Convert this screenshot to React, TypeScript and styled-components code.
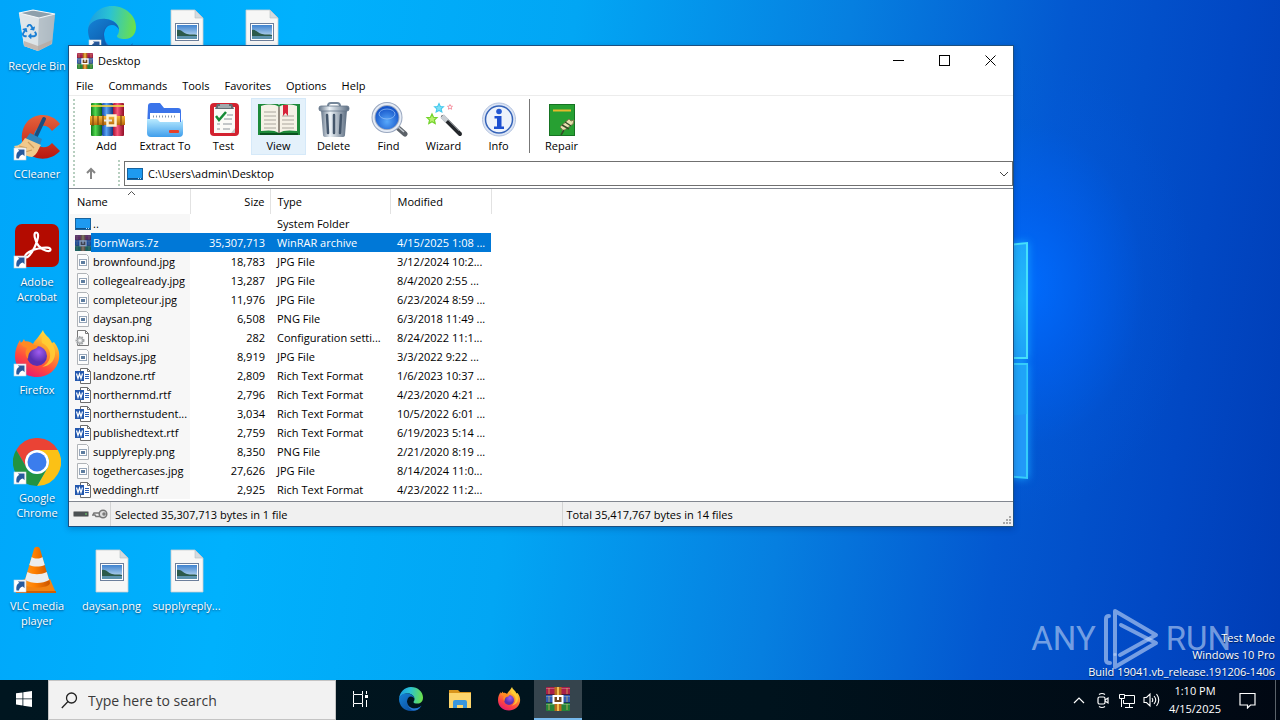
import React from "react";
import styled, { createGlobalStyle, css } from "styled-components";
import { FaRecycle } from "react-icons/fa";

const Global = createGlobalStyle`
  * { box-sizing: border-box; }
  html, body { margin: 0; padding: 0; }
  body { font-family: "Open Sans", "Noto Sans", sans-serif; font-size: 11px; line-height: 15px; color: #000; }
  button, input { font: inherit; color: inherit; }
  svg { display: block; flex: none; }
`;

/* ---------- desktop ---------- */
const Screen = styled.div`
  min-height: 100vh;
  display: flex;
  flex-direction: column;
  overflow: hidden;
`;
const Desktop = styled.main`
  position: relative;
  flex: 1;
  overflow: hidden;
  background:
    radial-gradient(ellipse 170px 230px at 1025px 285px, rgba(0, 108, 255, 0.95), rgba(0, 100, 250, 0.6) 35%, rgba(0, 90, 230, 0.18) 70%, rgba(0, 90, 230, 0) 100%),
    linear-gradient(98deg, #00a6fa 0%, #00b1fd 22%, #02a6f4 42%, #067fe0 62%, #0358d0 78%, #0148c4 90%, #003cb5 100%);
`;
const Pane = styled.svg`
  position: absolute;
  left: 960px;
  top: 236px;
  filter: drop-shadow(0 0 4px #16a4ff);
`;
const IconGrid = styled.div`
  display: grid;
  grid-template-columns: 74px repeat(3, 75px);
  grid-template-rows: repeat(6, 108px);
`;
const Shortcut = styled.button<{ $row: number; $col: number }>`
  grid-row: ${(p) => p.$row};
  grid-column: ${(p) => p.$col};
  display: flex;
  flex-direction: column;
  align-items: center;
  justify-content: flex-start;
  gap: 4px;
  padding: 6px 0 0;
  border: 0;
  background: none;
  color: #fff;
  text-shadow: 0 1px 2px rgba(0, 20, 60, 0.7);
`;
const ShortcutLabel = styled.span`
  max-width: 72px;
`;
const BuildInfo = styled.div`
  position: absolute;
  right: 5px;
  bottom: 0;
  color: #fff;
  text-align: right;
  line-height: 17px;
  text-shadow: 0 1px 1px rgba(0, 0, 0, 0.6);
`;
const Watermark = styled.div`
  position: absolute;
  right: 49px;
  bottom: 10px;
  display: flex;
  align-items: center;
  gap: 7px;
  font: 33px/62px Roboto, "Liberation Sans", sans-serif;
  color: rgba(190, 212, 245, 0.62);
`;

/* ---------- window ---------- */
const Window = styled.section`
  position: absolute;
  left: 68px;
  right: 266px;
  top: 45px;
  border: 1px solid #1c4f80;
  background: #fff;
  box-shadow: 0 2px 6px rgba(0, 20, 70, 0.25);
`;
const TitleBar = styled.header`
  display: flex;
  align-items: center;
  height: 29px;
  padding-left: 8px;
  gap: 5px;
`;
const Title = styled.h1`
  flex: 1;
  margin: 0;
  font-size: 11px;
  font-weight: 400;
`;
const WindowButtons = styled.div`
  display: flex;
  align-self: stretch;
`;
const WindowButton = styled.button`
  width: 46px;
  border: 0;
  padding: 0;
  background: none;
  display: grid;
  place-items: center;
`;
const MenuBar = styled.nav`
  display: flex;
  gap: 1px;
  height: 21px;
  border-bottom: 1px solid #ececec;
`;
const MenuItem = styled.button`
  border: 0;
  background: none;
  padding: 1px 7px 0;
`;
const Bar = styled.div<{ $height: number }>`
  display: flex;
  align-items: center;
  height: ${(p) => p.$height}px;
  padding-left: 4px;
`;
const Grip = styled.span`
  align-self: stretch;
  width: 2px;
  margin: 1px 0;
  background: repeating-linear-gradient(#b7cfc0 0 2px, transparent 2px 4px);
`;
const ToolBar = styled(Bar)`
  align-items: flex-start;
  padding-top: 2px;
`;
const Tools = styled.div`
  display: flex;
  margin-left: 4px;
`;
const Tool = styled.button<{ $wide?: boolean; $hot?: boolean }>`
  width: ${(p) => (p.$wide ? 62 : 55)}px;
  height: 57px;
  padding: 3px 0 0;
  border: 1px solid ${(p) => (p.$hot ? "#d5e9f9" : "transparent")};
  background: ${(p) => (p.$hot ? "#e4f1fb" : "none")};
  display: flex;
  flex-direction: column;
  align-items: center;
  white-space: nowrap;
`;
const Divider = styled.span`
  width: 1px;
  height: 54px;
  margin: 1px 4px 0 3px;
  background: #777;
`;
const UpButton = styled.button`
  width: 43px;
  padding: 0 0 0 8px;
  border: 0;
  background: none;
`;
const Address = styled.label`
  flex: 1;
  display: flex;
  align-items: center;
  gap: 5px;
  height: 25px;
  margin-left: 4px;
  padding: 0 3px 0 2px;
  border: 1px solid #707070;
`;
const AddressInput = styled.input`
  flex: 1;
  min-width: 0;
  padding: 0;
  border: 0;
  outline: 0;
  background: none;
`;
const DropButton = styled.button`
  border: 0;
  padding: 0;
  background: none;
`;
const ListPane = styled.div`
  padding: 0 0 2px 1px;
  border-top: 1px solid #828790;
  border-bottom: 1px solid #828790;
`;
const FileTable = styled.table`
  width: 421px;
  table-layout: fixed;
  border-collapse: collapse;
`;
const HeadCell = styled.th<{ $w: number; $right?: boolean }>`
  position: relative;
  width: ${(p) => p.$w}px;
  height: 25px;
  padding: 0 5px 0 7px;
  border-right: 1px solid #e2e2e2;
  font-weight: 400;
  text-align: ${(p) => (p.$right ? "right" : "left")};
`;
const SortMark = styled.svg`
  position: absolute;
  left: 57px;
  top: 1px;
`;
const cell = css`
  height: 19px;
  padding: 0 5px 0 7px;
  white-space: nowrap;
  overflow: hidden;
`;
const Cell = styled.td<{ $right?: boolean }>`
  ${cell}
  text-align: ${(p) => (p.$right ? "right" : "left")};
`;
const NameCell = styled.td`
  padding: 0;
  background: #f7f7f7;
`;
const NameFlex = styled.div`
  display: flex;
  align-items: center;
  height: 19px;
  padding-left: 5px;
`;
const FileName = styled.span`
  flex: 1;
  min-width: 0;
  line-height: 19px;
  padding-left: 2px;
  white-space: nowrap;
  overflow: hidden;
`;
const Row = styled.tr<{ $selected?: boolean }>`
  ${(p) =>
    p.$selected &&
    css`
      color: #fff;
      ${Cell}, ${FileName} { background: #0078d7; }
    `}
`;
const StatusBar = styled.footer`
  display: flex;
  align-items: center;
  height: 24px;
  background: #f0f0f0;
`;
const StatusIcons = styled.div`
  display: flex;
  gap: 3px;
  width: 41px;
  padding-left: 4px;
`;
const StatusCell = styled.div`
  flex: 1;
  display: flex;
  justify-content: space-between;
  align-self: stretch;
  padding: 5px 0 0 4px;
  border-left: 1px solid #d4d4d4;
`;
const SizeGrip = styled.svg`
  align-self: flex-end;
`;

/* ---------- taskbar ---------- */
const TaskBar = styled.footer`
  display: flex;
  height: 40px;
  background: linear-gradient(90deg, #001620, #00131d 60%, #010813);
  color: #fff;
`;
const TaskButton = styled.button<{ $active?: boolean }>`
  width: 48px;
  margin-right: 1px;
  padding: 0;
  border: 0;
  border-bottom: 2px solid ${(p) => (p.$active ? "#76b9ed" : "transparent")};
  background: ${(p) => (p.$active ? "#35444d" : "none")};
  display: grid;
  place-items: center;
`;
const StartButton = styled(TaskButton)`
  margin: 0;
`;
const Search = styled.label`
  display: flex;
  align-items: center;
  gap: 10px;
  width: 288px;
  padding-left: 12px;
  border: 1px solid #c4c4c4;
  background: #f2f2f2;
`;
const SearchInput = styled.input`
  flex: 1;
  min-width: 0;
  height: 24px;
  padding: 0;
  border: 0;
  outline: 0;
  background: none;
  font-size: 14px;
  &::placeholder { color: #3a3a3a; opacity: 1; }
`;
const Apps = styled.div`
  display: flex;
  padding-left: 2px;
`;
const Tray = styled.div`
  margin-left: auto;
  display: flex;
  align-items: center;
`;
const TrayButton = styled.button`
  width: 24px;
  height: 40px;
  padding: 0;
  border: 0;
  background: none;
  display: grid;
  place-items: center;
`;
const Clock = styled.time`
  width: 64px;
  text-align: center;
  line-height: 18px;
`;
const Notify = styled(TrayButton)`
  width: 40px;
  margin-right: 8px;
`;
const PeekEdge = styled.span`
  align-self: stretch;
  width: 5px;
  border-left: 1px solid #5b636a;
`;

/* ---------- drawings ---------- */
const Badge = () => (
  <g>
    <rect x="1" y="34" width="12" height="12" fill="#fff" stroke="#c8d4dc" strokeWidth=".6" />
    <path d="M3.500 44.500c-.6-4.500.6-7 3-7.600L4.800 35.500h6.700v6.700l-1.600-1.700c-2.400.6-3.600 2-3.900 4z" fill="#27599c" />
  </g>
);
const Recycle = () => (
  <svg width="48" height="48" viewBox="0 0 48 48">
    <defs>
      <linearGradient id="bin" x1="0" x2="1"><stop stopColor="#dfe7ec" /><stop offset=".6" stopColor="#c3cdd4" /><stop offset="1" stopColor="#93a3af" /></linearGradient>
    </defs>
    <path d="M6 7l14-3 22 4-3 30-14 7-14-5z" fill="url(#bin)" />
    <path d="M6 7l20 4-1 34-14-5z" fill="#dfe6ea" opacity=".85" />
    <path d="M26 11l16-3-3 30-14 7z" fill="#b3bec6" opacity=".8" />
    <path d="M6 7l14-3 22 4-16 4z" fill="#8ea0ac" stroke="#f4f7f9" strokeWidth="1.200" />
    <path d="M11 35l14 5 14-6-1 4-13 7-14-5z" fill="#b6a79d" opacity=".7" />
    <g color="#1b7fd4"><FaRecycle x="9" y="18" size={15} /></g>
  </svg>
);
const Edge = ({ size = 48 }: { size?: number }) => (
  <svg width={size} height={size} viewBox="0 0 48 48">
    <defs>
      <linearGradient id="eg" x1="0" y1=".3" x2="1" y2=".4"><stop stopColor="#1b9de2" /><stop offset=".45" stopColor="#2bc3d2" /><stop offset="1" stopColor="#6be04b" /></linearGradient>
      <linearGradient id="eb" x1="0" y1="0" x2=".8" y2="1"><stop stopColor="#1583d6" /><stop offset="1" stopColor="#0c4fa0" /></linearGradient>
    </defs>
    <path d="M0 24C1 10 11 0 24 0c14 0 24 10 24 21 0 8-5 12-11 12-5 0-8-1-8-3 0-1 2-2 2-6 0-6-6-11-13-11C9 13 2 17 0 24z" fill="url(#eg)" />
    <path d="M0 24c1-8 9-12 18-11 8 1 13 6 13 11-1-3-4-5-7-5-5 0-8 4-8 10 0 9 7 16 16 18-3 1-5 1-8 1C10 48 0 37 0 24z" fill="url(#eb)" />
    <path d="M16 29c0 10 8 14 15 14 6 0 10-2 13-5 1-1 1 0 0 1-4 6-9 8-12 8-9-1-17-9-17-18 0-5 3-9 6-10-3 2-5 5-5 10z" fill="#1460b8" />
    <path d="M16 28c0 9 6 14 14 15 6 0 11-2 14-5-5 7-9 9-13 9-9-1-15-9-15-19z" fill="#2f86df" opacity=".7" />
  </svg>
);
const EdgeShortcut = () => (
  <svg width="48" height="48" viewBox="0 0 48 48"><Edge /><Badge /></svg>
);
const Picture = () => (
  <svg width="48" height="48" viewBox="0 0 48 48">
    <defs><linearGradient id="sky" x1="0" y1="0" x2="0" y2="1"><stop stopColor="#3f83cf" /><stop offset="1" stopColor="#d4e8f5" /></linearGradient></defs>
    <path d="M8 4h24l8 8v34H8z" fill="#f7f7f6" stroke="#c9ced1" strokeWidth=".8" />
    <path d="M32 4v8h8z" fill="#d3dadf" stroke="#b7bfc5" strokeWidth=".6" />
    <rect x="12.500" y="17.500" width="23" height="17" fill="#fff" stroke="#6c7f9c" />
    <path d="M14 19h20v14H14z" fill="url(#sky)" />
    <path d="M14 24c4-1 6 3 10 4s7 0 10 1v2H14z" fill="#2c5a4a" />
    <path d="M14 30h20v3H14z" fill="#5d93ad" />
  </svg>
);
const CCleaner = () => (
  <svg width="48" height="48" viewBox="0 0 48 48">
    <defs><linearGradient id="cc" x1="0" y1="0" x2="0" y2="1"><stop stopColor="#e5633c" /><stop offset="1" stopColor="#b81710" /></linearGradient></defs>
    <path d="M47 10C38-2 22-1 14 8c-7 8-7 22 0 30 8 9 24 9 33-1l-8-8c-4 5-11 6-15 1-4-4-4-11 0-15 4-5 11-4 15 2z" fill="url(#cc)" />
    <path d="M31 5l-8 17" stroke="#1d4d7d" strokeWidth="4" strokeLinecap="round" />
    <path d="M17 19l12 6-2 6-15-5z" fill="#2f86bd" />
    <path d="M12 24l16 7c-3 4-3 9-9 12C10 42 4 37 1 32c5 0 8-3 11-8z" fill="#f0c98c" />
    <path d="M6 32l8 2M12 38l7-2M15 28l6 6" stroke="#cf9e5c" strokeWidth="1.200" />
    <Badge />
  </svg>
);
const Acrobat = () => (
  <svg width="48" height="48" viewBox="0 0 48 48">
    <rect x="2" y="2" width="44" height="43" rx="7" fill="#b30b00" />
    <path d="M23 10.500c4 0 1.500 9-1.500 15C18 32.500 14 36.500 12.500 35c-2-3 7-7.500 13-8.500 7-1.500 12-1.200 12 1.200 0 3-7.500 1-12-4C22 19.500 20 10.500 23 10.500z" fill="none" stroke="#fff" strokeWidth="2.200" strokeLinejoin="round" />
    <Badge />
  </svg>
);
const Firefox = ({ size = 48, badge }: { size?: number; badge?: boolean }) => (
  <svg width={size} height={size} viewBox="0 0 48 48">
    <defs>
      <linearGradient id="ff" x1=".8" y1="0" x2=".3" y2="1"><stop stopColor="#fff04a" /><stop offset=".35" stopColor="#ffa22a" /><stop offset=".7" stopColor="#ff4a3d" /><stop offset="1" stopColor="#e51a70" /></linearGradient>
      <radialGradient id="fp" cx=".6" cy=".3"><stop stopColor="#a05cf0" /><stop offset="1" stopColor="#5a2fb0" /></radialGradient>
    </defs>
    <path d="M30 0c1 5 7 7 9 13l2-1c4 5 6 10 5 17-2 11-11 18-22 18C11 47 2 38 2 26c0-6 2-11 5-16l1 4 3-5 2 5c2-1 5-1 7 0 2-4 6-7 10-14z" fill="url(#ff)" />
    <circle cx="24" cy="26" r="10" fill="url(#fp)" />
    <path d="M7 13c5-3 11-2 14 2l4 1c-1 3-4 3-6 4-3 2-4 5-4 9-3-4-3-8-1-11-3-1-5-2-7-5z" fill="#ff8a22" />
    <path d="M29 13c5 2 9 8 8 14-1 5-4 8-8 10 9-1 14-8 13-16-1-8-7-11-12-17-1 4-2 6-1 9z" fill="#ffcf35" opacity=".85" />
    {badge && <Badge />}
  </svg>
);
const Chrome = () => (
  <svg width="48" height="48" viewBox="0 0 48 48">
    <path d="M3.200 12A24 24 0 0 1 44.800 12L24 12A12 12 0 0 0 13.600 18L13.600 30z" fill="#ea4335" />
    <path d="M44.800 12A24 24 0 0 1 24 48L34.400 30A12 12 0 0 0 34.400 18L24 12z" fill="#fbc116" />
    <path d="M24 48A24 24 0 0 1 3.200 12L13.600 30A12 12 0 0 0 24 36l10.400-6z" fill="#229342" />
    <circle cx="24" cy="24" r="12" fill="#fff" />
    <circle cx="24" cy="24" r="9.500" fill="#3b7ded" />
    <Badge />
  </svg>
);
const Vlc = () => (
  <svg width="48" height="48" viewBox="0 0 48 48">
    <defs><linearGradient id="vl" x1="0" x2="1"><stop stopColor="#ff9a22" /><stop offset=".4" stopColor="#ff8000" /><stop offset="1" stopColor="#c95400" /></linearGradient></defs>
    <path d="M11 33h26l6 14H3z" fill="#f28312" />
    <path d="M3 45h40v2H3z" fill="#cf5f04" />
    <path d="M21 3c1-3 5-3 6 0l10 34c0 6-26 6-26 0z" fill="url(#vl)" />
    <path d="M18.700 11c3 2 8 2 10.700 0l2.400 8c-5 2-11 2-15.500 0zM14.400 26c6 3 13 3 19.400 0l2.400 8c-7 4-17 4-24.200 0z" fill="#eceded" />
    <Badge />
  </svg>
);

const Books = () => (
  <svg width="36" height="36" viewBox="0 0 36 36">
    <defs>
      <linearGradient id="bg" x1="0" x2="1"><stop stopColor="#0d7a1b" /><stop offset=".4" stopColor="#52d84f" /><stop offset="1" stopColor="#0a5f18" /></linearGradient>
      <linearGradient id="bb" x1="0" x2="1"><stop stopColor="#1746a8" /><stop offset=".4" stopColor="#59a4f4" /><stop offset="1" stopColor="#123582" /></linearGradient>
      <linearGradient id="br" x1="0" x2="1"><stop stopColor="#a51233" /><stop offset=".4" stopColor="#f7577c" /><stop offset="1" stopColor="#8f0d24" /></linearGradient>
      <linearGradient id="gold" x1="0" y1="0" x2="0" y2="1"><stop stopColor="#f6b93c" /><stop offset="1" stopColor="#b96a0c" /></linearGradient>
    </defs>
    <rect x="2" y="1" width="11" height="33" rx="1" fill="url(#bg)" />
    <rect x="13" y="1" width="11" height="33" rx="1" fill="url(#bb)" />
    <rect x="24" y="1" width="11" height="33" rx="1" fill="url(#br)" />
    <path d="M2 4h33" stroke="#f0d24a" strokeWidth="2" opacity=".85" />
    <rect x="1" y="14" width="35" height="9" fill="url(#gold)" />
    <path d="M4 13v11M9 14v9M14 13v11M32 13v11" stroke="#7d450b" strokeWidth="1.200" />
    <rect x="18.500" y="13.500" width="8" height="10" fill="none" stroke="#fff3d2" strokeWidth="2.500" />
    <path d="M15 18.500h8" stroke="#e8e8e8" strokeWidth="2" />
  </svg>
);
const WinRar = ({ size = 16, tint }: { size?: number; tint?: boolean }) => (
  <svg width={size} height={size} viewBox="0 0 24 24">
    <rect x="0" y="0" width="24" height="8" rx="1" fill="#a81f49" />
    <rect x="0" y="8" width="24" height="8" rx="1" fill="#2f5cb4" />
    <rect x="0" y="16" width="24" height="8" rx="1" fill="#25843a" />
    <path d="M0 1.500h24M0 9.500h24M0 17.500h24" stroke="#fff" opacity=".25" />
    <path d="M0 7.500h24M0 15.500h24" stroke="#14182c" opacity=".6" />
    <path d="M3 1v6M3 9v6M3 17v6M21 1v6M21 9v6M21 17v6" stroke="#e0bd58" strokeWidth="1.200" opacity=".6" />
    <rect x="8.500" y="0" width="7" height="24" fill="#b86b1c" />
    <path d="M12 0v8M12 17v7" stroke="#f0bd50" strokeWidth="2" />
    <rect x="7.500" y="9" width="9" height="7" fill="#72471d" stroke="#fff" strokeWidth="2" />
    <path d="M12 8v5" stroke="#fff" strokeWidth="2" />
    {tint && <rect width="24" height="24" fill="#0b3c80" opacity=".5" />}
  </svg>
);
const Extract = () => (
  <svg width="36" height="36" viewBox="0 0 36 36">
    <defs><linearGradient id="fo" x1="0" y1="0" x2="0" y2="1"><stop stopColor="#b9ebff" /><stop offset="1" stopColor="#3f9eec" /></linearGradient></defs>
    <path d="M1 4q0-3 3-3h9l4 5h14q3 0 3 3v16H0z" fill="#3b74ea" />
    <path d="M3 11h30v10H3z" fill="#fff" />
    <path d="M6 14.500h24" stroke="#8795aa" strokeWidth="2" strokeDasharray="1 2" />
    <path d="M0 17h10l3 3h21l2-3v14q0 4-4 4H4q-4 0-4-4z" fill="url(#fo)" />
    <rect x="22" y="28" width="10" height="3" rx="1" fill="#e5402b" />
  </svg>
);
const Test = () => (
  <svg width="36" height="36" viewBox="0 0 36 36">
    <rect x="4" y="1" width="29" height="33" rx="4" fill="#d3222f" />
    <path d="M8 5h21v26H8z" fill="#fbfbf7" />
    <path d="M25 31l4-5v5z" fill="#c6c9c9" />
    <path d="M11 2h15l2 5H9z" fill="#626e74" />
    <path d="M14 3h9M12 5h13" stroke="#dfe5e7" />
    <path d="M10 14l3 4 7-8" fill="none" stroke="#168b36" strokeWidth="2.500" />
    <path d="M21 13h6M18 17h8M11 22h3M17 22h9M11 27h3M17 27h7" stroke="#8b9399" strokeWidth="1.200" />
  </svg>
);
const View = () => (
  <svg width="44" height="36" viewBox="0 0 44 36">
    <path d="M1 2h20l1 1 1-1h20v31H1z" fill="#1d8a3a" />
    <path d="M3 32h38" stroke="#0b5220" strokeWidth="2" />
    <path d="M4 4c7-2 14-2 18 1 4-3 11-3 18-1v25c-7-1-14-1-18 2-4-3-11-3-18-2z" fill="#f5f1e6" />
    <path d="M22 5v26" stroke="#766d60" strokeWidth="1.500" />
    <path d="M7 10h12M7 14h12M7 18h12M7 22h12M7 26h12M25 14h12M25 18h12M25 22h12M25 26h12" stroke="#aaa69d" />
    <path d="M26 3h5v11l-2.500-3-2.500 3z" fill="#d6243a" />
  </svg>
);
const Trash = () => (
  <svg width="36" height="36" viewBox="0 0 36 36">
    <defs><linearGradient id="tr" x1="0" x2="1"><stop stopColor="#68788b" /><stop offset=".35" stopColor="#edf3f8" /><stop offset="1" stopColor="#5b6c80" /></linearGradient></defs>
    <path d="M12 4q0-3 3-3h6q3 0 3 3" fill="none" stroke="#76879a" strokeWidth="2" />
    <path d="M5 8h26l-2 25q0 2-3 2H10q-3 0-3-2z" fill="url(#tr)" />
    <rect x="3" y="4" width="30" height="5" rx="2" fill="url(#tr)" stroke="#65768a" strokeWidth=".8" />
    <path d="M11 13l1 18M18 13v18M25 13l-1 18" stroke="#44566b" strokeWidth="2.500" strokeLinecap="round" />
  </svg>
);
const Find = () => (
  <svg width="38" height="36" viewBox="0 0 38 36">
    <defs><radialGradient id="ln" cx=".5" cy=".65"><stop stopColor="#59a9fb" /><stop offset="1" stopColor="#1656ca" /></radialGradient></defs>
    <path d="M27 25l8 7" stroke="#5b6168" strokeWidth="5" strokeLinecap="round" />
    <path d="M27 24l7 6" stroke="#c5cad0" strokeWidth="1.500" />
    <circle cx="17" cy="15.500" r="13.500" fill="url(#ln)" stroke="#9aa8c0" strokeWidth="4" />
    <circle cx="17" cy="15.500" r="13.500" fill="none" stroke="#e5ebf5" strokeWidth="2" />
    <ellipse cx="17" cy="12" rx="8" ry="5" fill="none" stroke="#9dc6fa" opacity=".7" />
  </svg>
);
const star = "M0-5l1.500 3.300 3.500.3-2.600 2.400.8 3.500L0 2.700l-3.200 1.800.8-3.500L-5-1.400l3.500-.3z";
const Wizard = () => (
  <svg width="38" height="36" viewBox="0 0 38 36">
    <path d="M18 15l17 17" stroke="#24272b" strokeWidth="4" strokeLinecap="round" />
    <path d="M20 15l14 14" stroke="#777d83" strokeWidth="1" />
    <path d="M17 14l5 5" stroke="#c9ced3" strokeWidth="5" />
    <g strokeWidth="1.200">
      <path d={star} transform="translate(7 17)" fill="#b7f06e" stroke="#73d32b" />
      <path d={star} transform="translate(14 6) scale(.9)" fill="#7fe0f6" stroke="#43c8ec" />
      <path d={star} transform="translate(25 5) scale(.5)" fill="#fff" stroke="#f0526a" />
    </g>
  </svg>
);
const Info = () => (
  <svg width="36" height="36" viewBox="0 0 36 36">
    <circle cx="18" cy="17.500" r="16.500" fill="#dce5f5" stroke="#b4c3df" />
    <circle cx="18" cy="17.500" r="13.500" fill="#eef3fb" stroke="#3563b8" strokeWidth="1.500" />
    <circle cx="18" cy="9.500" r="2.800" fill="#2458d2" />
    <path d="M13.500 14h7v10.500h2.500V27h-10v-2.500h3v-8h-2.500z" fill="#1d4fd0" />
  </svg>
);
const Repair = () => (
  <svg width="36" height="36" viewBox="0 0 36 36">
    <rect x="5.500" y="2.500" width="25" height="31" fill="#27a032" stroke="#167322" />
    <path d="M9 8.500h18" stroke="#e5b92c" strokeWidth="2" />
    <path d="M16 25l9-8 2 2 3-1-1 4-10 7-1-2z" fill="#e7dfae" stroke="#827d50" strokeWidth="1" />
    <path d="M18 23l7 4M21 20l6 4M17 33l3-5" stroke="#354d28" strokeWidth="1.500" />
  </svg>
);

const Screenlet = () => (
  <svg width="16" height="16" viewBox="0 0 16 16">
    <rect x=".5" y="2.500" width="15" height="11" fill="#1e9af0" stroke="#17639f" />
    <path d="M1 12.500h14" stroke="#0d4f86" />
    <path d="M11 12.500h3" stroke="#b9e0fa" strokeDasharray="1 1" />
  </svg>
);
const ImageFile = () => (
  <svg width="16" height="16" viewBox="0 0 16 16">
    <path d="M2.500.5h9l2 2v13h-11z" fill="#fcfcfc" stroke="#b0b4b8" />
    <rect x="4.500" y="5.500" width="7" height="6" fill="#fff" stroke="#97a6b8" />
    <rect x="6" y="7" width="4" height="3" fill="#5d7da0" />
  </svg>
);
const IniFile = () => (
  <svg width="16" height="16" viewBox="0 0 16 16">
    <path d="M2.500.5h8l3 3v12h-11z" fill="#fcfcfc" stroke="#777" />
    <path d="M10.500.5v3h3" fill="none" stroke="#777" />
    <circle cx="5" cy="10.500" r="3.500" fill="#d5d7d8" stroke="#9fa2a4" strokeWidth="2" strokeDasharray="1.500 1" />
    <circle cx="5" cy="10.500" r="2.800" fill="#d5d7d8" stroke="#9fa2a4" />
    <circle cx="5" cy="10.500" r="1" fill="#fff" />
  </svg>
);
const RtfFile = () => (
  <svg width="16" height="16" viewBox="0 0 16 16">
    <path d="M5.500.5h7l3 3v12h-10z" fill="#fff" stroke="#6d6d6d" />
    <path d="M12.500.5v3h3" fill="none" stroke="#6d6d6d" />
    <path d="M10 6.500h4M10 8.500h4M10 10.500h4" stroke="#2b5fb4" />
    <rect x="0" y="3" width="9" height="10" fill="#2358ae" />
    <path d="M1.500 5.500l1.500 5 1.500-4.500 1.500 4.500 1.500-5" fill="none" stroke="#fff" strokeWidth="1.200" />
  </svg>
);
const fileIcons = { image: <ImageFile />, ini: <IniFile />, rtf: <RtfFile />, folder: <Screenlet />, rar: <WinRar tint /> };
type Kind = keyof typeof fileIcons;

const files: [Kind, string, string, string, string][] = [
  ["folder", "..", "", "System Folder", ""],
  ["rar", "BornWars.7z", "35,307,713", "WinRAR archive", "4/15/2025 1:08 ..."],
  ["image", "brownfound.jpg", "18,783", "JPG File", "3/12/2024 10:2..."],
  ["image", "collegealready.jpg", "13,287", "JPG File", "8/4/2020 2:55 ..."],
  ["image", "completeour.jpg", "11,976", "JPG File", "6/23/2024 8:59 ..."],
  ["image", "daysan.png", "6,508", "PNG File", "6/3/2018 11:49 ..."],
  ["ini", "desktop.ini", "282", "Configuration setti...", "8/24/2022 11:1..."],
  ["image", "heldsays.jpg", "8,919", "JPG File", "3/3/2022 9:22 ..."],
  ["rtf", "landzone.rtf", "2,809", "Rich Text Format", "1/6/2023 10:37 ..."],
  ["rtf", "northernmd.rtf", "2,796", "Rich Text Format", "4/23/2020 4:21 ..."],
  ["rtf", "northernstudent...", "3,034", "Rich Text Format", "10/5/2022 6:01 ..."],
  ["rtf", "publishedtext.rtf", "2,759", "Rich Text Format", "6/19/2023 5:14 ..."],
  ["image", "supplyreply.png", "8,350", "PNG File", "2/21/2020 8:19 ..."],
  ["image", "togethercases.jpg", "27,626", "JPG File", "8/14/2024 11:0..."],
  ["rtf", "weddingh.rtf", "2,925", "Rich Text Format", "4/23/2022 11:2..."],
];
const shortcuts: [number, number, React.ReactNode, string][] = [
  [1, 1, <Recycle />, "Recycle Bin"],
  [1, 2, <EdgeShortcut />, ""],
  [1, 3, <Picture />, ""],
  [1, 4, <Picture />, ""],
  [2, 1, <CCleaner />, "CCleaner"],
  [3, 1, <Acrobat />, "Adobe Acrobat"],
  [4, 1, <Firefox badge />, "Firefox"],
  [5, 1, <Chrome />, "Google Chrome"],
  [6, 1, <Vlc />, "VLC media player"],
  [6, 2, <Picture />, "daysan.png"],
  [6, 3, <Picture />, "supplyreply..."],
];
const tools: [string, React.ReactNode][] = [
  ["Add", <Books />],
  ["Extract To", <Extract />],
  ["Test", <Test />],
  ["View", <View />],
  ["Delete", <Trash />],
  ["Find", <Find />],
  ["Wizard", <Wizard />],
  ["Info", <Info />],
];

export default function App() {
  return (
    <Screen>
      <Global />
      <Desktop>
        <Pane width="74" height="248" viewBox="0 0 74 248">
          <defs>
            <linearGradient id="p1" x1="0" y1="0" x2="0" y2="1"><stop stopColor="#1fa8fb" /><stop offset=".5" stopColor="#22bcf8" /><stop offset="1" stopColor="#1ea0f8" /></linearGradient>
          </defs>
          <path d="M0 14L67 7v115H0z" fill="url(#p1)" stroke="#45e0fb" strokeWidth="2" />
          <path d="M0 128h67v114L0 236z" fill="#2299f8" stroke="#35cdfb" strokeWidth="2" />
          <path d="M0 186l67-8v-49H0z" fill="#1cb0f8" opacity=".5" />
        </Pane>
        <IconGrid>
          {shortcuts.map(([row, col, icon, label]) => (
            <Shortcut key={`${row}-${col}`} $row={row} $col={col}>
              {icon}
              {label && <ShortcutLabel>{label}</ShortcutLabel>}
            </Shortcut>
          ))}
        </IconGrid>
        <Watermark>
          <span>ANY</span>
          <svg width="56" height="62" viewBox="0 0 56 62" fill="none" stroke="currentColor" strokeWidth="4" strokeLinejoin="round" strokeLinecap="round">
            <path d="M6 8q-3 0-3 3v41q0 3 4 3" />
            <path d="M12 46V3l41 24-36 20" />
            <path d="M18 17l35 18L12 59V47" />
          </svg>
          <span>RUN</span>
        </Watermark>
        <BuildInfo>
          <div>Test Mode</div>
          <div>Windows 10 Pro</div>
          <div>Build 19041.vb_release.191206-1406</div>
        </BuildInfo>

        <Window>
          <TitleBar>
            <WinRar />
            <Title>Desktop</Title>
            <WindowButtons>
              <WindowButton><svg width="11" height="11"><path d="M0 5.500h11" stroke="#000" /></svg></WindowButton>
              <WindowButton><svg width="11" height="11"><rect x=".5" y=".5" width="10" height="10" fill="none" stroke="#000" /></svg></WindowButton>
              <WindowButton><svg width="11" height="11"><path d="M.5.5l10 10M10.500.5l-10 10" stroke="#000" /></svg></WindowButton>
            </WindowButtons>
          </TitleBar>
          <MenuBar>
            {["File", "Commands", "Tools", "Favorites", "Options", "Help"].map((m) => (
              <MenuItem key={m}>{m}</MenuItem>
            ))}
          </MenuBar>
          <ToolBar $height={63}>
            <Grip />
            <Tools>
              {tools.map(([label, icon]) => (
                <Tool key={label} $wide={label === "Extract To"} $hot={label === "View"}>
                  {icon}
                  {label}
                </Tool>
              ))}
            </Tools>
            <Divider />
            <Tool>
              <Repair />
              Repair
            </Tool>
          </ToolBar>
          <Bar $height={29}>
            <Grip />
            <UpButton>
              <svg width="16" height="16" fill="none" stroke="#858585" strokeWidth="2"><path d="M8 13V3M4 7l4-4 4 4" /></svg>
            </UpButton>
            <Grip />
            <Address>
              <Screenlet />
              <AddressInput defaultValue="C:\Users\admin\Desktop" />
              <DropButton><svg width="10" height="10" fill="none" stroke="#444"><path d="M1 3l4 4 4-4" /></svg></DropButton>
            </Address>
          </Bar>
          <ListPane>
            <FileTable>
              <thead>
                <tr>
                  <HeadCell $w={120}>
                    Name
                    <SortMark width="9" height="6" fill="none" stroke="#555"><path d="M1 5l3.500-3.500L8 5" /></SortMark>
                  </HeadCell>
                  <HeadCell $w={80} $right>Size</HeadCell>
                  <HeadCell $w={120}>Type</HeadCell>
                  <HeadCell $w={101}>Modified</HeadCell>
                </tr>
              </thead>
              <tbody>
                {files.map(([kind, name, size, type, date]) => (
                  <Row key={name} $selected={kind === "rar"}>
                    <NameCell>
                      <NameFlex>
                        {fileIcons[kind]}
                        <FileName>{name}</FileName>
                      </NameFlex>
                    </NameCell>
                    <Cell $right>{size}</Cell>
                    <Cell>{type}</Cell>
                    <Cell>{date}</Cell>
                  </Row>
                ))}
              </tbody>
            </FileTable>
          </ListPane>
          <StatusBar>
            <StatusIcons>
              <svg width="16" height="10"><rect x=".5" y="2.500" width="15" height="5" rx="1" fill="#4b5052" stroke="#999" /><path d="M12 5h2" stroke="#6fe06d" /></svg>
              <svg width="16" height="10" fill="none" stroke="#777" strokeWidth="1.500"><circle cx="11" cy="5" r="3.800" fill="#ddd" /><circle cx="12" cy="5" r="1" /><path d="M7 4H2L.8 6H3l1 1.500h4" /></svg>
            </StatusIcons>
            <StatusCell>Selected 35,307,713 bytes in 1 file</StatusCell>
            <StatusCell>
              Total 35,417,767 bytes in 14 files
              <SizeGrip width="12" height="12" fill="#a8a8a8"><path d="M8 2h2v2H8zM5 5h2v2H5zM8 5h2v2H8zM2 8h2v2H2zM5 8h2v2H5zM8 8h2v2H8z" /></SizeGrip>
            </StatusCell>
          </StatusBar>
        </Window>
      </Desktop>

      <TaskBar>
        <StartButton>
          <svg width="16" height="16" fill="#fff"><path d="M0 2.300l6.500-.9v6.100H0zM7.300 1.300L16 0v7.500H7.300zM0 8.300h6.500v6.200L0 13.600zM7.300 8.300H16V16l-8.700-1.300z" /></svg>
        </StartButton>
        <Search>
          <svg width="17" height="17" fill="none" stroke="#222" strokeWidth="1.300"><circle cx="10.500" cy="6" r="5" /><path d="M7 9.500L.8 16" /></svg>
          <SearchInput placeholder="Type here to search" />
        </Search>
        <TaskButton>
          <svg width="17" height="16" fill="none" stroke="#fff"><path d="M1.500 0v3.500h9V0M1.500 16v-3.500h9V16M1.500 4v8M10.500 4v8M14.500 0v3M14.500 9v7" /><path d="M13 4h3v3h-3z" fill="#fff" stroke="none" /></svg>
        </TaskButton>
        <Apps>
          <TaskButton><Edge size={24} /></TaskButton>
          <TaskButton>
            <svg width="24" height="24" viewBox="0 0 24 24">
              <path d="M1 3h9l2 2h11v5H1z" fill="#d9951c" />
              <path d="M1 6h22v15H1z" fill="#fcd46b" />
              <path d="M5 21v-6q0-2 2-2h10q2 0 2 2v6h-4v-3H9v3z" fill="#3a96dd" />
            </svg>
          </TaskButton>
          <TaskButton><Firefox size={24} /></TaskButton>
          <TaskButton $active><WinRar size={24} /></TaskButton>
        </Apps>
        <Tray>
          <TrayButton><svg width="12" height="8" fill="none" stroke="#fff" strokeWidth="1.200"><path d="M1 7l5-5 5 5" /></svg></TrayButton>
          <TrayButton><svg width="14" height="17" fill="none" stroke="#fff" strokeWidth="1.200"><rect x="2" y="5" width="7" height="7" rx="1.500" /><path d="M9 8l3-2v5L9 9M3 2.500q3-2 6 0M3 14.500q3 2 6 0" /></svg></TrayButton>
          <TrayButton><svg width="17" height="15" fill="none" stroke="#fff"><path d="M5.500 2.500h10v8h-11V7M10.500 11v3M6 14.500h8M.5 1.500h5v4h-5zM2.500 6v8" /></svg></TrayButton>
          <TrayButton><svg width="17" height="16" fill="none" stroke="#fff" strokeWidth="1.100"><path d="M1 5.500h2.500L7 2v12l-3.500-3.500H1zM9 6q1.500 2 0 4M11 4q3.500 4 0 8M13.500 2q4.500 6 0 12" /></svg></TrayButton>
          <Clock>1:10 PM<br />4/15/2025</Clock>
          <Notify><svg width="17" height="17" fill="none" stroke="#fff" strokeWidth="1.200"><path d="M1 1.500h15v11.500h-4.500L8.500 16v-3H1z" /></svg></Notify>
          <PeekEdge />
        </Tray>
      </TaskBar>
    </Screen>
  );
}
